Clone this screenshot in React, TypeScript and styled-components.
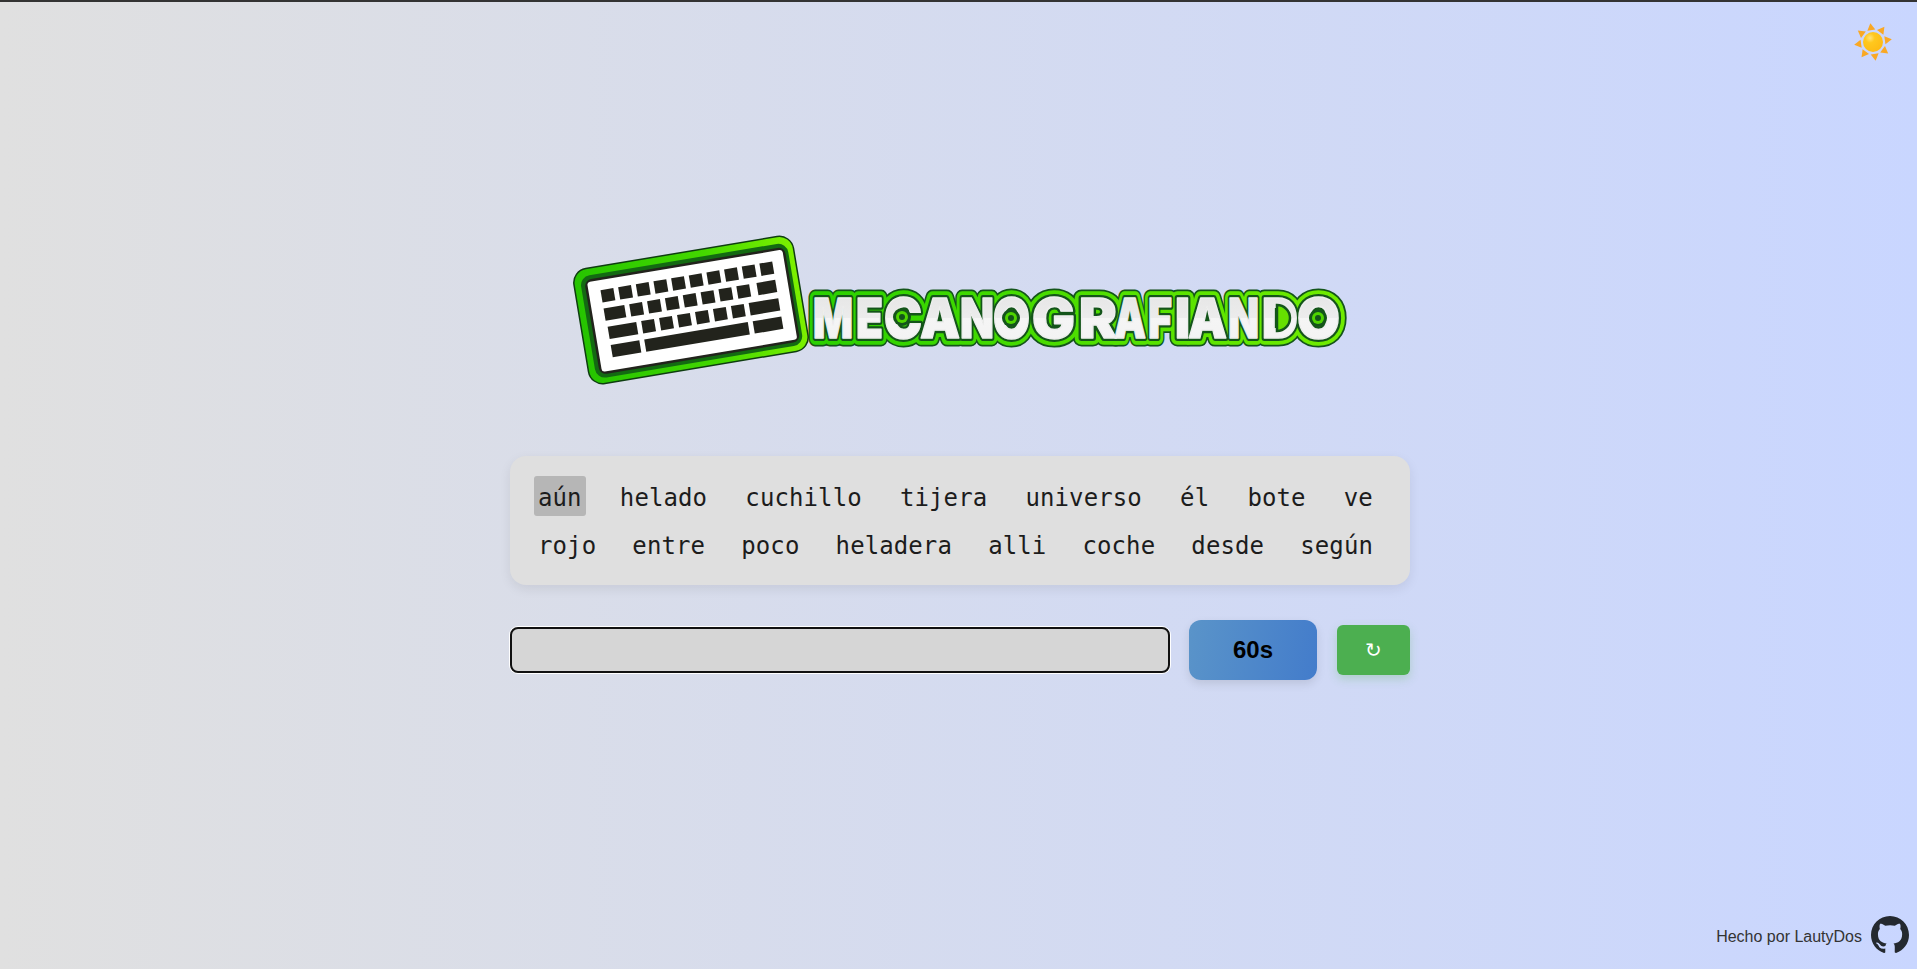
import React from "react";
import styled, { createGlobalStyle } from "styled-components";

const Global = createGlobalStyle`
  html, body { margin: 0; padding: 0; height: 100%; }
  body { font-family: "Liberation Sans", Arial, sans-serif; overflow: hidden; }
`;

const Page = styled.div`
  box-sizing: border-box;
  position: relative;
  height: 969px;
  border-top: 2px solid #333;
  background: linear-gradient(90deg, #e0e0e0 0%, #c9d6ff 100%);
  padding: 223px 0 0 3px;
  display: flex;
  flex-direction: column;
  align-items: center;
`;

const ThemeToggle = styled.button`
  position: absolute;
  top: 19px;
  right: 23px;
  width: 42px;
  height: 42px;
  padding: 0;
  border: 0;
  background: none;
  display: flex;
`;

const Logo = styled.svg`
  display: block;
  width: 790px;
  height: 170px;
  margin-bottom: 61px;
`;

const LogoText = styled.text`
  font-family: Inter, "Liberation Sans", sans-serif;
  font-weight: 900;
  font-size: 55px;
`;

const Panel = styled.section`
  box-sizing: border-box;
  width: 900px;
  height: 129px;
  padding: 20px 33px 21px 24px;
  border-radius: 16px;
  background: #dfdfdf;
  box-shadow: 0 4px 12px rgba(0, 0, 0, 0.08);
  display: flex;
  flex-direction: column;
  gap: 8px;
`;

const WordRow = styled.div`
  display: flex;
  justify-content: space-between;
`;

const Word = styled.span<{ $active?: boolean }>`
  height: 40px;
  line-height: 44px;
  padding: 0 4px;
  border-radius: 3px;
  font-family: "DejaVu Sans Mono", "Liberation Mono", monospace;
  font-size: 24px;
  letter-spacing: 0.1px;
  color: #1c1c1c;
  background: ${(p) => (p.$active ? "#b6b6b6" : "transparent")};
`;

const Controls = styled.div`
  width: 900px;
  height: 60px;
  margin-top: 35px;
  display: flex;
  align-items: center;
`;

const TypeInput = styled.input`
  box-sizing: border-box;
  width: 660px;
  height: 46px;
  margin-right: 19px;
  border: 2px solid #111;
  border-radius: 8px;
  background: #d6d6d6;
  box-shadow: 0 0 0 1px #fff;
  outline: none;
`;

const Timer = styled.div`
  width: 128px;
  height: 60px;
  margin-right: 20px;
  border-radius: 12px;
  background: linear-gradient(100deg, #5a94c9 0%, #437ccb 100%);
  box-shadow: 0 4px 10px rgba(0, 0, 0, 0.1);
  display: flex;
  align-items: center;
  justify-content: center;
  font-size: 24px;
  font-weight: 700;
  color: #000;
`;

const Restart = styled.button`
  width: 73px;
  height: 50px;
  padding: 0;
  border: 0;
  border-radius: 6px;
  background: #4caf50;
  box-shadow: 0 4px 10px rgba(76, 175, 80, 0.25);
  color: #fff;
  font-family: "DejaVu Sans", sans-serif;
  font-size: 20px;
`;

const Footer = styled.footer`
  position: absolute;
  right: 8px;
  bottom: 15px;
  display: flex;
  align-items: center;
  gap: 9px;
  font-size: 16px;
  color: #333;
`;

const Credit = styled.span`
  margin-top: 4px;
`;

const rows: string[][] = [
  ["aún", "helado", "cuchillo", "tijera", "universo", "él", "bote", "ve"],
  ["rojo", "entre", "poco", "heladera", "alli", "coche", "desde", "según"],
];

const keyRows: [number, number][][] = [
  Array.from({ length: 10 }, (_, i) => [12 + i * 17.9, 13] as [number, number]),
  [[12, 21], ...Array.from({ length: 7 }, (_, i) => [38 + i * 18.1, 13] as [number, number]), [167, 19]],
  [[13, 29], ...Array.from({ length: 6 }, (_, i) => [47 + i * 18.2, 13] as [number, number]), [156, 30]],
  [[13, 29], [47, 105], [157, 29]],
];

const SunRays = [-8, 37, 82, 127, 172, 217, 262, 307];

// page x of each letter of the logo word: [letter, left, right]
const logoLetters: [string, number, number][] = [
  ["M", 813, 853],
  ["E", 856, 883],
  ["C", 884, 922],
  ["A", 920, 960],
  ["N", 960, 994],
  ["O", 993, 1030],
  ["G", 1032, 1075],
  ["R", 1079, 1117],
  ["A", 1114, 1146],
  ["F", 1148, 1172],
  ["I", 1175, 1190],
  ["A", 1188, 1227],
  ["N", 1228, 1259],
  ["D", 1262, 1298],
  ["O", 1297, 1340],
];
const LOGO_X = 565;

export default function App() {
  return (
    <Page>
      <Global />
      <ThemeToggle aria-label="tema">
        <svg width="42" height="42" viewBox="-21 -21 42 42">
          <defs>
            <radialGradient id="sunFill" cx="0.35" cy="0.3" r="0.8">
              <stop offset="0" stopColor="#ffe27a" />
              <stop offset="0.3" stopColor="#ffc81e" />
              <stop offset="1" stopColor="#fdb913" />
            </radialGradient>
          </defs>
          {SunRays.map((a) => (
            <polygon key={a} points="-4,-12 4,-12 0,-19" fill="#f9a825" transform={`rotate(${a})`} />
          ))}
          <circle r="10" fill="url(#sunFill)" />
        </svg>
      </ThemeToggle>

      <Logo viewBox="0 0 790 170">
        <defs>
          <linearGradient id="kbFrame" x1="0" y1="0" x2="1" y2="0">
            <stop offset="0" stopColor="#26c400" />
            <stop offset="0.6" stopColor="#44d800" />
            <stop offset="1" stopColor="#7cf000" />
          </linearGradient>
          <linearGradient id="txtFill" x1="0" y1="0" x2="0" y2="1">
            <stop offset="0" stopColor="#e4e4e4" />
            <stop offset="0.5" stopColor="#ececec" />
            <stop offset="0.5" stopColor="#f5f5f5" />
            <stop offset="1" stopColor="#f2f2f2" />
          </linearGradient>
          <linearGradient id="txtGreen" x1="0" y1="0" x2="1" y2="0">
            <stop offset="0" stopColor="#2ad000" />
            <stop offset="1" stopColor="#70ec00" />
          </linearGradient>
          <LogoText id="logoWord" y="113" strokeLinejoin="round">
            {logoLetters.map(([l, a, b], i) => (
              <tspan key={i} x={a - LOGO_X} textLength={b - a} lengthAdjust="spacingAndGlyphs">
                {l}
              </tspan>
            ))}
          </LogoText>
        </defs>

        <use href="#logoWord" fill="#14551a" stroke="#14551a" strokeWidth="17" />
        <use href="#logoWord" fill="url(#txtGreen)" stroke="url(#txtGreen)" strokeWidth="13.5" />
        <use href="#logoWord" fill="#14551a" stroke="#14551a" strokeWidth="6" />
        <use href="#logoWord" fill="url(#txtFill)" stroke="#eeeeee" strokeWidth="1.4" />
        {[
          [337, 92],
          [446, 93],
          [753, 93],
        ].map(([x, y]) => (
          <g key={x}>
            <circle cx={x} cy={y} r="9" fill="#14551a" />
            <circle cx={x} cy={y} r="6" fill="#4fd400" />
            <circle cx={x} cy={y} r="3" fill="#14551a" />
          </g>
        ))}
        <path d="M712 80 a13 13 0 0 1 0 26 z" fill="#66e000" stroke="#14551a" strokeWidth="2.5" />

        <g transform="translate(126 85) rotate(-9.5)">
          <rect x="-112" y="-59" width="224" height="118" rx="15" fill="#0e3d10" />
          <rect x="-110.5" y="-57.5" width="221" height="115" rx="13.5" fill="url(#kbFrame)" />
          <rect x="-104.5" y="-51" width="210" height="103.5" rx="10" fill="#136a12" />
          <rect x="-100.5" y="-47" width="203" height="96" rx="7" fill="#22231c" />
          <rect x="-98" y="-44.5" width="198" height="91" rx="3" fill="#fff" />
          <g transform="translate(-98 -44.5)" fill="#22231c">
            {keyRows.map((row, r) =>
              row.map(([x, w], i) => (
                <rect key={`${r}-${i}`} x={x} y={10 + r * 18.6} width={w} height="12.5" />
              )),
            )}
          </g>
        </g>
      </Logo>

      <Panel>
        {rows.map((row, r) => (
          <WordRow key={r}>
            {row.map((w, i) => (
              <Word key={w} $active={r === 0 && i === 0}>
                {w}
              </Word>
            ))}
          </WordRow>
        ))}
      </Panel>

      <Controls>
        <TypeInput type="text" aria-label="texto" />
        <Timer>60s</Timer>
        <Restart>↻</Restart>
      </Controls>

      <Footer>
        <Credit>Hecho por LautyDos</Credit>
        <svg width="38" height="38" viewBox="0 0 16 16" fill="#24292f">
          <path d="M8 0C3.58 0 0 3.58 0 8c0 3.54 2.29 6.53 5.47 7.59.4.07.55-.17.55-.38 0-.19-.01-.82-.01-1.49-2.01.37-2.53-.49-2.69-.94-.09-.23-.48-.94-.82-1.13-.28-.15-.68-.52-.01-.53.63-.01 1.08.58 1.23.82.72 1.21 1.87.87 2.33.66.07-.52.28-.87.51-1.07-1.78-.2-3.64-.89-3.64-3.95 0-.87.31-1.59.82-2.15-.08-.2-.36-1.02.08-2.12 0 0 .67-.21 2.2.82.64-.18 1.32-.27 2-.27.68 0 1.36.09 2 .27 1.53-1.04 2.2-.82 2.2-.82.44 1.1.16 1.92.08 2.12.51.56.82 1.27.82 2.15 0 3.07-1.87 3.75-3.65 3.95.29.25.54.73.54 1.48 0 1.07-.01 1.93-.01 2.2 0 .21.15.46.55.38A8.013 8.013 0 0016 8c0-4.42-3.58-8-8-8z" />
        </svg>
      </Footer>
    </Page>
  );
}
